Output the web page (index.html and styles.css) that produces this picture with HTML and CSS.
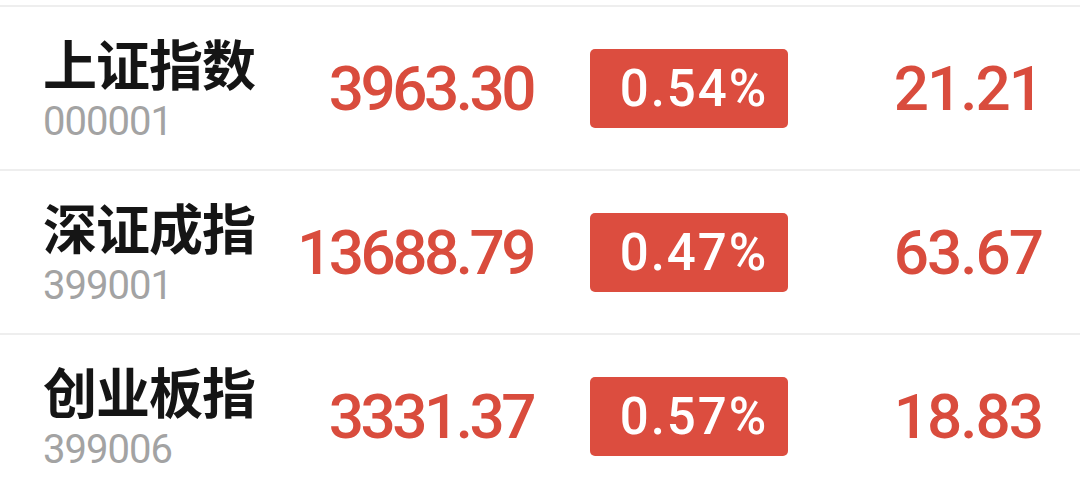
FILE: index.html
```html
<!DOCTYPE html>
<html lang="zh-CN">
<head>
<meta charset="utf-8">
<title>指数</title>
<link rel="stylesheet" href="styles.css">
</head>
<body>
<div class="list">
  <div class="row">
    <div class="name-col">
      <div class="name">上证指数</div>
      <div class="code">000001</div>
    </div>
    <div class="price">3963.30</div>
    <div class="badge">0.54%</div>
    <div class="value">21.21</div>
  </div>
  <div class="row">
    <div class="name-col">
      <div class="name">深证成指</div>
      <div class="code">399001</div>
    </div>
    <div class="price">13688.79</div>
    <div class="badge">0.47%</div>
    <div class="value">63.67</div>
  </div>
  <div class="row">
    <div class="name-col">
      <div class="name">创业板指</div>
      <div class="code">399006</div>
    </div>
    <div class="price">3331.37</div>
    <div class="badge">0.57%</div>
    <div class="value">18.83</div>
  </div>
</div>
</body>
</html>
```
FILE: styles.css
```css
html, body {
  margin: 0;
  padding: 0;
  background: #ffffff;
}
body {
  font-family: Roboto, "Noto Sans", sans-serif;
  overflow: hidden;
}
.list {
  padding-top: 5px;
}
.row {
  display: flex;
  align-items: center;
  height: 162px;
  border-top: 2px solid #eeeeee;
  padding: 0 38px 0 43px;
}
.name-col {
  width: 250px;
  display: flex;
  flex-direction: column;
}
.name {
  font-family: "Noto Sans CJK SC", sans-serif;
  font-weight: 700;
  font-size: 54px;
  line-height: 56px;
  color: #151515;
  letter-spacing: -1px;
}
.code {
  font-size: 40px;
  line-height: 38px;
  margin-top: 12px;
  color: #a3a3a3;
  letter-spacing: -1px;
}
.price {
  width: 240px;
  text-align: right;
  font-size: 62px;
  font-weight: 500;
  color: #d94c3d;
  letter-spacing: -3.5px;
}
.badge {
  margin-left: 57px;
  width: 198px;
  height: 79px;
  padding-left: 10px;
  box-sizing: border-box;
  border-radius: 5px;
  background: #dc4d3f;
  color: #ffffff;
  display: flex;
  align-items: center;
  justify-content: center;
  font-size: 51px;
  font-weight: 500;
  letter-spacing: 2px;
}
.value {
  flex: 1;
  text-align: right;
  font-size: 62px;
  font-weight: 500;
  color: #d94c3d;
  letter-spacing: -2px;
}
```
